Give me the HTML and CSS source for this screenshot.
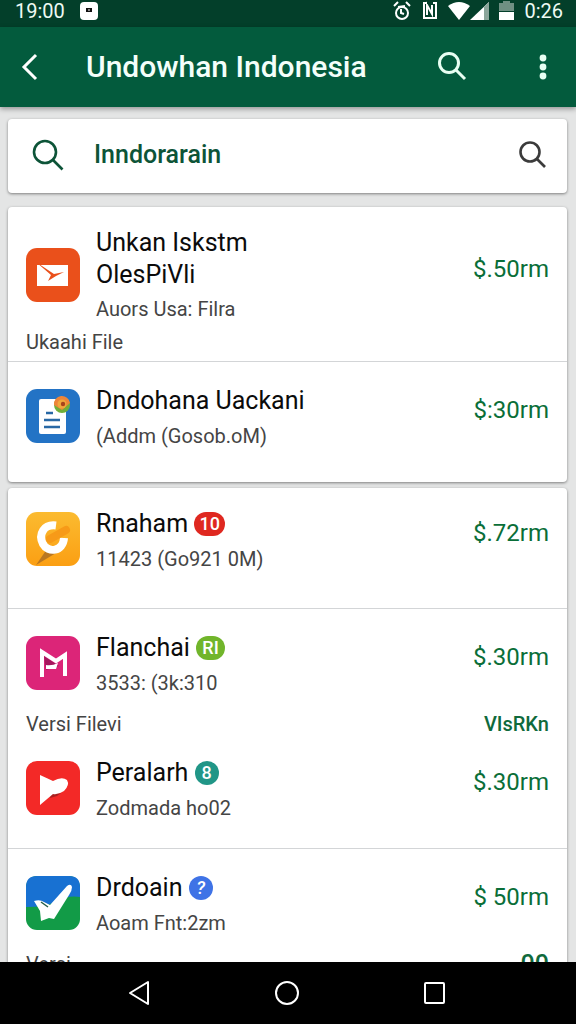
FILE: index.html
```html
<!DOCTYPE html>
<html lang="id">
<head>
<meta charset="utf-8">
<meta name="viewport" content="width=device-width, initial-scale=1">
<title>Undowhan Indonesia</title>
<link rel="stylesheet" href="styles.css">
</head>
<body class="screen">
<div class="status">
  <span>19:00</span>
  <svg class="status-app" width="20" height="20" viewBox="0 0 20 20"><rect x="1" y="1" width="18" height="18" rx="4" fill="#fff"/><path d="M7 7h6v4H7z" fill="#111"/><path d="M9 9h2" stroke="#fff"/></svg>
  <svg width="20" height="20" viewBox="0 0 20 20" fill="none" stroke="#fff" stroke-width="2"><circle cx="10" cy="12" r="6"/><path d="M2 5l4-4M18 5l-4-4M9 8v4l3 1M6 6l7-1" /></svg>
  <svg width="16" height="20" viewBox="0 0 16 20" fill="none" stroke="#fff" stroke-width="2"><path d="M5 17H2V2h3M11 2h3v15H5M5 14V4l5 9V4"/></svg>
  <div class="status-signal">
    <svg width="22" height="18" viewBox="0 0 22 18" fill="#fff"><path d="M0 4Q11-4 22 4L11 18z"/></svg>
    <svg width="19" height="18" viewBox="0 0 19 18"><path d="M0 18L19 0v18z" fill="#fff"/><path d="M14 5l5-5v18h-5z" fill="#8ba59a"/></svg>
  </div>
  <svg width="15" height="20" viewBox="0 0 15 20"><path d="M0 2h4V0h7v2h4v8H0z" fill="#6f9083"/><path d="M0 11h15v8H0z" fill="#fff"/></svg>
  <span>0:26</span>
</div>
<header class="appbar">
  <button class="icon-button" aria-label="Kembali"><svg width="18" height="28" viewBox="0 0 18 28" fill="none" stroke="#fff" stroke-width="3"><path d="M15 2L3 14l12 12"/></svg></button>
  <h1 class="appbar-title">Undowhan Indonesia</h1>
  <button class="icon-button" aria-label="Cari"><svg width="30" height="30" viewBox="0 0 30 30" fill="none" stroke="#e8fff3" stroke-width="3"><circle cx="12" cy="11" r="9.500"/><path d="M18.500 17.500L28 27"/></svg></button>
  <button class="icon-button icon-button--menu" aria-label="Menu"><svg width="8" height="26" viewBox="0 0 8 26" fill="#e8fff3"><circle cx="4" cy="4" r="3.400"/><circle cx="4" cy="13" r="3.400"/><circle cx="4" cy="22" r="3.400"/></svg></button>
</header>
<main class="content">
  <form class="card search">
    <svg width="32" height="32" viewBox="0 0 32 32" fill="none" stroke="#0d5438" stroke-width="2.600"><circle cx="13" cy="13" r="11"/><path d="M21 21l9.500 9.500"/></svg>
    <input class="search-input" type="text" aria-label="Pencarian" value="Inndorarain">
    <button class="icon-button" type="button" aria-label="Cari"><svg width="28" height="28" viewBox="0 0 28 28" fill="none" stroke="#3b3b3b" stroke-width="2.600"><circle cx="12" cy="11" r="9.500"/><path d="M19 18l8 8"/></svg></button>
  </form>

  <ul class="card list">
    <li class="item">
      <div class="row row--tall">
        <svg class="app-icon" viewBox="0 0 54 54"><rect width="54" height="54" rx="11" fill="#ea501b"/><path d="M11 17h31v21H11z" fill="#fff"/><path d="M10 14l18 12 10-2-8 4-8 5 3-6z" fill="#ea501b"/></svg>
        <div class="row-text"><h2 class="title">Unkan Iskstm<br>OlesPiVli</h2><p class="detail">Auors Usa: Filra</p></div>
        <span class="price">$.50rm</span>
      </div>
      <div class="label"><span>Ukaahi File</span></div>
    </li>
    <li class="item item--end">
      <div class="row">
        <svg class="app-icon" viewBox="0 0 54 54"><rect width="54" height="54" rx="11" fill="#2373c5"/><path d="M13 12q0-2 2-2h15l10 12v21q0 2-2 2H15q-2 0-2-2z" fill="#fff"/><path d="M20 24h7M18 31h16M18 38h16" stroke="#2868a5" stroke-width="2.600"/><circle cx="36" cy="16" r="8" fill="#70af39"/><path d="M28 16a8 8 0 0 1 16-2l-8 7z" fill="#ed8539"/><circle cx="36" cy="15" r="4.500" fill="#f0a83c"/><circle cx="37" cy="15" r="2.200" fill="#a8431d"/></svg>
        <div class="row-text"><h2 class="title">Dndohana Uackani</h2><p class="detail">(Addm (Gosob.oM)</p></div>
        <span class="price">$:30rm</span>
      </div>
    </li>
  </ul>

  <ul class="card list">
    <li class="item item--spaced">
      <div class="row">
        <svg class="app-icon" viewBox="0 0 54 54"><defs><linearGradient id="amber" x1="0" y1="0" x2="0" y2="1"><stop offset="0" stop-color="#fbbb30"/><stop offset="1" stop-color="#fb9f13"/></linearGradient></defs><rect width="54" height="54" rx="11" fill="url(#amber)"/><path d="M10 53l11-16 9 4z" fill="#ba7721"/><path d="M30 13.500C18 12 12 22 17 32c5 9 20 8 21-6" fill="none" stroke="#fff" stroke-width="8"/><path d="M24 27l16-9" fill="none" stroke="#f79a18" stroke-width="8" stroke-linecap="round"/></svg>
        <div class="row-text"><h2 class="title">Rnaham <span class="badge badge--red">10</span></h2><p class="detail">11423 (Go921 0M)</p></div>
        <span class="price">$.72rm</span>
      </div>
    </li>
    <li class="item item--group">
      <div class="row">
        <svg class="app-icon" viewBox="0 0 54 54"><rect width="54" height="54" rx="11" fill="#dc2578"/><path d="M18 20l15 10-13 4z" fill="#a5175d"/><path d="M16 41V16l14 9 9-6v21" fill="none" stroke="#fff" stroke-width="4"/><path d="M20 29q6 1 12-2l-2 6H20z" fill="#fff"/></svg>
        <div class="row-text"><h2 class="title">Flanchai <span class="badge badge--green">RI</span></h2><p class="detail">3533: (3k:310</p></div>
        <span class="price">$.30rm</span>
      </div>
      <div class="label label--between"><span>Versi Filevi</span><strong class="label-value">VIsRKn</strong></div>
      <div class="row">
        <svg class="app-icon" viewBox="0 0 54 54"><rect width="54" height="54" rx="11" fill="#f32927"/><path d="M24 37l7-2 4-3-10 1z" fill="#a9201f"/><path d="M14 14l13 6q9-5 14-1 3 5-3 11-6 4-11 3L14 44z" fill="#fff"/></svg>
        <div class="row-text"><h2 class="title">Peralarh <span class="badge badge--teal">8</span></h2><p class="detail">Zodmada ho02</p></div>
        <span class="price">$.30rm</span>
      </div>
    </li>
    <li class="item item--end">
      <div class="row">
        <svg class="app-icon" viewBox="0 0 54 54"><rect width="54" height="54" rx="11" fill="#129b47"/><path d="M0 31V11Q0 0 11 0h32q11 0 11 11v10q-12-2-23 4T0 31z" fill="#1871d2"/><path d="M8 25q6-2 10 1l6 3L41 10q4-3 5 1 0 4-3 8L28 43l-5-1-8 3-1-10z" fill="#fff"/><path d="M15 26l7 5" stroke="#265e48" stroke-width="1.500"/></svg>
        <div class="row-text"><h2 class="title">Drdoain <span class="badge badge--blue">?</span></h2><p class="detail">Aoam Fnt:2zm</p></div>
        <span class="price">$ 50rm</span>
      </div>
      <div class="label label--between"><span>Versi</span><strong class="label-value label-value--large">00</strong></div>
    </li>
  </ul>
</main>
<nav class="navbar">
  <button class="icon-button" aria-label="Kembali"><svg width="24" height="26" viewBox="0 0 24 26" fill="none" stroke="#fff" stroke-width="2" stroke-linejoin="round"><path d="M20 2v22L2 13z"/></svg></button>
  <button class="icon-button" aria-label="Beranda"><svg width="26" height="26" viewBox="0 0 26 26" fill="none" stroke="#fff" stroke-width="2"><circle cx="12" cy="13" r="11"/></svg></button>
  <button class="icon-button" aria-label="Terbaru"><svg width="24" height="24" viewBox="0 0 24 24" fill="none" stroke="#fff" stroke-width="2"><rect x="1" y="2" width="19" height="20" rx="1"/></svg></button>
</nav>
</body>
</html>
```
FILE: styles.css
```css
* { box-sizing: border-box; }
.screen {
  margin: 0;
  height: 100vh;
  display: flex;
  flex-direction: column;
  overflow: hidden;
  background: #e4e5e5;
  color: #0b0b0b;
  font-family: Roboto, "Liberation Sans", sans-serif;
}
svg { display: block; flex: none; }
.icon-button {
  display: flex;
  padding: 0;
  border: 0;
  background: none;
}
.status {
  flex: none;
  display: flex;
  align-items: center;
  gap: 10px;
  height: 27px;
  padding: 0 13px 5px 15px;
  background: #033f2a;
  color: #eefaf4;
  font-size: 20px;
  line-height: 22px;
}
.status-app { margin: 0 auto 0 4px; }
.status-signal { display: flex; }
.appbar {
  flex: none;
  display: flex;
  align-items: center;
  height: 80px;
  padding: 0 29px 0 21px;
  background: #035b3d;
  box-shadow: 0 2px 5px rgba(0, 0, 0, .35);
  z-index: 1;
}
.appbar-title {
  flex: 1;
  margin: 0 0 0 47px;
  color: #f4fffa;
  font-size: 30px;
  font-weight: 500;
  line-height: 36px;
}
.icon-button--menu { margin-left: 72px; }
.content {
  flex: 1;
  min-height: 0;
  overflow: hidden;
  padding: 12px 9px 0 8px;
}
.card {
  background: #fff;
  border-radius: 4px;
  box-shadow: 0 1px 3px rgba(0, 0, 0, .45);
}
.search {
  display: flex;
  align-items: center;
  height: 74px;
  margin-bottom: 14px;
  padding: 0 21px 2px 24px;
}
.search-input {
  flex: 1;
  min-width: 0;
  margin-left: 30px;
  padding: 0;
  border: 0;
  outline: 0;
  background: none;
  color: #0d5438;
  font: 500 25px/32px Roboto, "Liberation Sans", sans-serif;
}
.list {
  list-style: none;
  margin: 0 0 6px;
  padding: 0;
}
.item {
  padding: 23px 18px 3px;
  border-bottom: 1px solid #d3d5d7;
}
.item:first-child { padding-top: 20px; }
.item--spaced { padding-bottom: 30px; }
.item--group { padding-bottom: 21px; }
.item--end { padding-bottom: 27px; border-bottom: 0; }
.row {
  display: flex;
  align-items: flex-start;
  gap: 16px;
}
.row--tall { align-items: center; }
.app-icon { width: 54px; height: 54px; margin-top: 4px; }
.row--tall .app-icon { margin: 0 0 4px; }
.row-text { flex: 1; min-width: 0; }
.title {
  margin: 0;
  font-size: 25px;
  font-weight: 400;
  line-height: 32px;
}
.detail {
  margin: 0;
  color: #454545;
  font-size: 20px;
  line-height: 38px;
}
.row--tall .detail { line-height: 36px; }
.price {
  margin-top: 9px;
  color: #0a6e38;
  font-size: 24px;
  line-height: 32px;
}
.row--tall .price { margin: 0 0 16px; }
.label {
  color: #444;
  font-size: 20px;
  line-height: 31px;
}
.label--between {
  display: flex;
  justify-content: space-between;
  margin: 7px 0 17px;
}
.label-value { color: #0f6a3c; font-size: 20px; font-weight: 500; }
.label-value--large { font-size: 25px; }
.badge {
  display: inline-block;
  min-width: 24px;
  border-radius: 12px;
  color: #fff;
  font-size: 18px;
  font-weight: 500;
  line-height: 24px;
  text-align: center;
  vertical-align: 2px;
}
.badge--red { min-width: 31px; background: #df2820; }
.badge--green { min-width: 29px; background: #71b52b; }
.badge--teal { background: #219687; }
.badge--blue { background: #3f73e6; font-style: italic; }
.navbar {
  flex: none;
  display: flex;
  align-items: center;
  justify-content: center;
  gap: 123px;
  height: 62px;
  background: #000;
}
```
